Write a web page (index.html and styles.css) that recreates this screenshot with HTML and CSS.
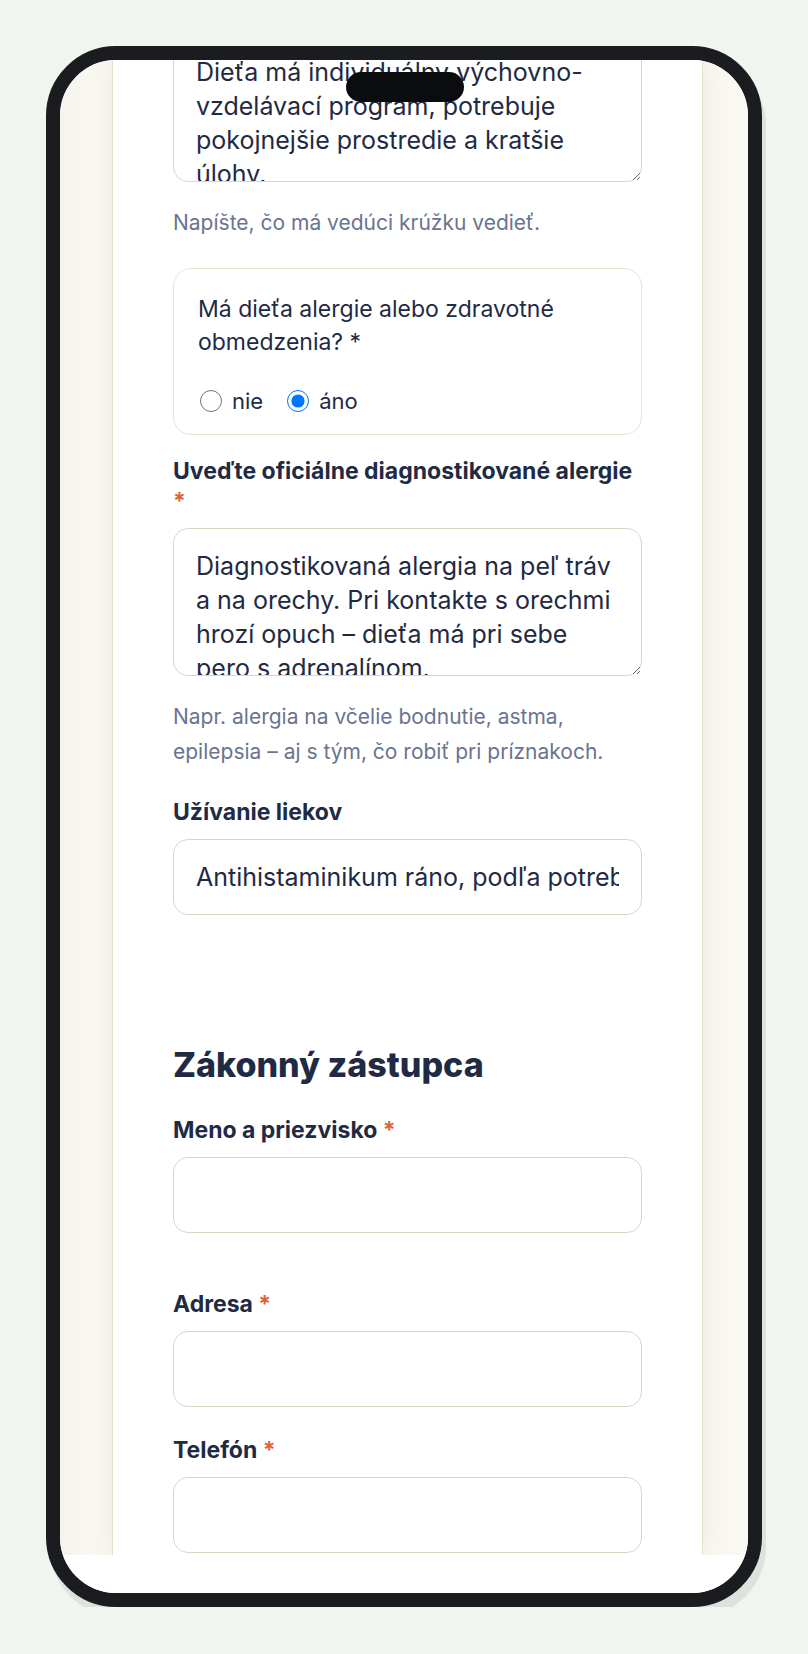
FILE: index.html
```html
<!DOCTYPE html>
<html lang="sk">
<head>
<meta charset="utf-8">
<title>Prihláška na krúžok</title>
<link rel="stylesheet" href="styles.css">
</head>
<body>
<div class="stage">
  <div class="phone">
    <div class="notch"></div>
    <div class="viewport">
      <main class="card">
        <textarea class="control control--area control--scrolled" aria-label="Poznámky">Dieťa má individuálny výchovno-vzdelávací program, potrebuje pokojnejšie prostredie a kratšie úlohy.</textarea>
        <p class="hint">Napíšte, čo má vedúci krúžku vedieť.</p>

        <div class="choice">
          <p class="choice__question">Má dieťa alergie alebo zdravotné obmedzenia? *</p>
          <div class="choice__options">
            <label class="option"><input type="radio" name="alergie" class="option__radio"> nie</label>
            <label class="option"><input type="radio" name="alergie" class="option__radio" checked> áno</label>
          </div>
        </div>

        <div class="field field--after-choice">
          <label class="field__label" for="alergie">Uveďte oficiálne diagnostikované alergie <span class="req">*</span></label>
          <textarea id="alergie" class="control control--area">Diagnostikovaná alergia na peľ tráv a na orechy. Pri kontakte s orechmi hrozí opuch – dieťa má pri sebe pero s adrenalínom.</textarea>
          <p class="hint">Napr. alergia na včelie bodnutie, astma, epilepsia – aj s tým, čo robiť pri príznakoch.</p>
        </div>

        <div class="field">
          <label class="field__label" for="lieky">Užívanie liekov</label>
          <input id="lieky" class="control" type="text" value="Antihistaminikum ráno, podľa potreby">
        </div>

        <h2 class="section-title">Zákonný zástupca</h2>

        <div class="field field--first">
          <label class="field__label" for="meno">Meno a priezvisko <span class="req">*</span></label>
          <input id="meno" class="control" type="text">
        </div>

        <div class="field field--spaced">
          <label class="field__label" for="adresa">Adresa <span class="req">*</span></label>
          <input id="adresa" class="control" type="text">
        </div>

        <div class="field">
          <label class="field__label" for="telefon">Telefón <span class="req">*</span></label>
          <input id="telefon" class="control" type="tel">
        </div>
      </main>
    </div>
    <div class="home-area"></div>
  </div>
</div>
</body>
</html>
```
FILE: styles.css
```css
html, body {
  margin: 0;
  padding: 0;
}

body {
  background: #f2f4f0;
  font-family: Inter, "Noto Sans", sans-serif;
  color: #1f2a44;
}

.stage {
  padding: 46px 0 0 46px;
}

.phone {
  position: relative;
  width: 716px;
  height: 1561px;
  box-sizing: border-box;
  border: 14px solid #1b1c20;
  border-radius: 70px;
  background: #ffffff;
  box-shadow: 4px 10px 0 #dfe1dc;
  overflow: hidden;
  display: flex;
  flex-direction: column;
}

.notch {
  position: absolute;
  top: 12px;
  left: 50%;
  width: 118px;
  height: 30px;
  margin-left: -58px;
  border-radius: 15px;
  background: #0b0c0e;
  z-index: 5;
}

.viewport {
  flex: 1;
  min-height: 0;
  display: flex;
  padding-left: 52px;
  background: linear-gradient(90deg, #f5f3ed 0, #faf8f2 30px, #faf8f2 100%);
  overflow: hidden;
}

.card {
  flex: 0 0 591px;
  box-sizing: border-box;
  background: #ffffff;
  border-left: 1px solid #e6e0d2;
  border-right: 1px solid #e6e0d2;
  box-shadow: 0 0 26px rgba(140, 120, 80, 0.12);
  padding: 0 60px;
}

.home-area {
  flex: 0 0 38px;
  background: #ffffff;
}

.control {
  display: block;
  width: 100%;
  box-sizing: border-box;
  height: 76px;
  margin: 0;
  padding: 0 22px;
  border: 1px solid #ddd5c4;
  border-radius: 15px;
  background: #ffffff;
  font-family: inherit;
  font-size: 25px;
  color: #1f2a44;
  outline: none;
}

.control--area {
  height: 148px;
  padding: 20px 22px;
  line-height: 34px;
  resize: vertical;
  overflow: hidden;
}

.control--scrolled {
  margin-top: -26px;
}

.hint {
  margin: 23px 0 0;
  font-size: 21px;
  line-height: 35px;
  color: #6a7490;
}

.choice {
  margin-top: 28px;
  border: 1px solid #e8e2d4;
  border-radius: 18px;
  padding: 24px 24px 13px;
}

.choice__question {
  margin: 0 0 22px;
  font-size: 23px;
  line-height: 33px;
}

.choice__options {
  display: flex;
  align-items: center;
  height: 40px;
  gap: 22px;
}

.option {
  display: inline-flex;
  align-items: center;
  gap: 10px;
  font-size: 22px;
}

.option__radio {
  width: 22px;
  height: 22px;
  margin: 0 0 0 2px;
}

.field {
  margin-top: 28px;
}

.field--after-choice {
  margin-top: 21px;
}

.field--first {
  margin-top: 30px;
}

.field--spaced {
  margin-top: 56px;
}

.field__label {
  display: block;
  margin-bottom: 12px;
  font-size: 23px;
  font-weight: 700;
  line-height: 30px;
  color: #1f2a44;
}

.req {
  color: #e0622f;
}

.section-title {
  margin: 130px 0 0;
  font-weight: 800;
  font-size: 34px;
  line-height: 40px;
  color: #1f2a44;
}
```
